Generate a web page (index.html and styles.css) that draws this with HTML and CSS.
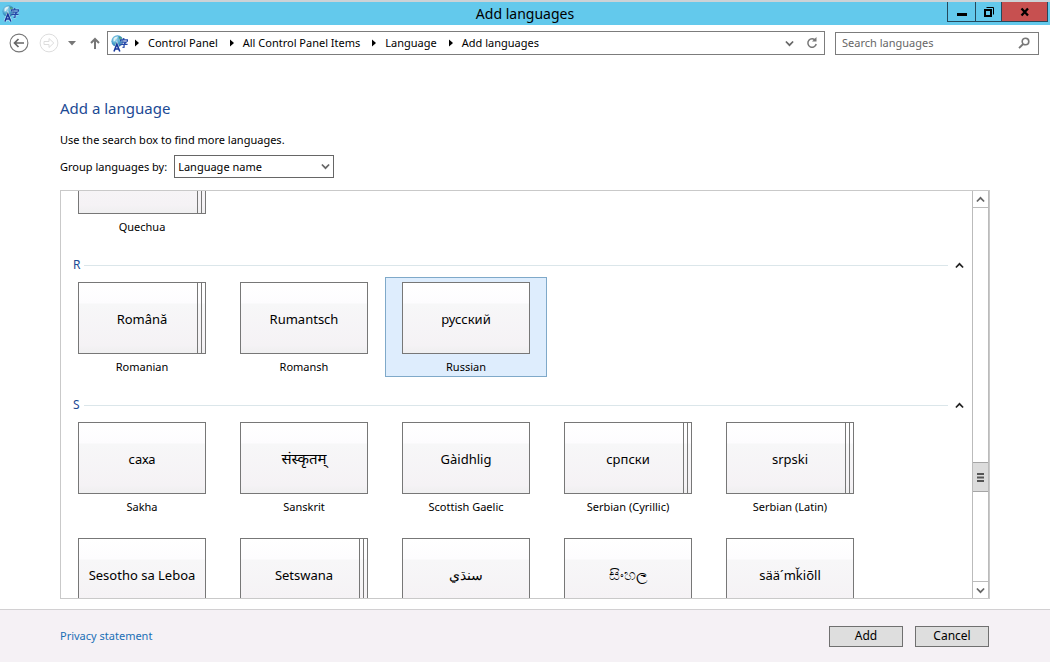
FILE: index.html
```html
<!DOCTYPE html>
<html lang="en">
<head>
<meta charset="utf-8">
<title>Add languages</title>
<link rel="stylesheet" href="styles.css">
</head>
<body>
<svg class="defs" width="0" height="0" aria-hidden="true">
  <defs>
    <radialGradient id="globe-fill" cx="35%" cy="35%" r="75%">
      <stop offset="0" stop-color="#a8dcee"/>
      <stop offset="0.5" stop-color="#4aa3d0"/>
      <stop offset="1" stop-color="#1d5f98"/>
    </radialGradient>
    <symbol id="globe" viewBox="0 0 16 16">
      <circle cx="6" cy="5.800" r="5.600" fill="url(#globe-fill)"/>
      <path d="M2.400 3.600C3.400 2 5 1.200 6.600 1.400L5.600 3.200 4.200 4 3.800 5.600 2.400 6z" fill="#dff2f4"/>
      <path d="M7.500 1.600l2.400 1 .4 1.600-2.400.4zM3.600 7.600l2-.8 1 1.400-1 1.400z" fill="#3f9a7a"/>
      <path d="M12 2.800v1.400M9 6V4.500h6.400V6M10 6.700h4.200L12.500 8.200M8.600 8.900h7M12.300 8.600v2.900l-1.500.2" fill="none" stroke="#fff" stroke-opacity=".5" stroke-width="2"/>
      <path d="M12 2.800v1.400M9 6V4.500h6.400V6M10 6.700h4.200L12.500 8.200M8.600 8.900h7M12.300 8.600v2.900l-1.500.2" fill="none" stroke="#2347a8" stroke-width="1.200"/>
      <path d="M2.800 15.500L5.500 8.700 8.300 15.500M3.900 13.200h3.300" fill="none" stroke="#fff" stroke-opacity=".7" stroke-width="2.600"/>
      <path d="M2.800 15.500L5.500 8.700 8.300 15.500M3.900 13.200h3.300" fill="none" stroke="#17379c" stroke-width="1.500"/>
    </symbol>
    <symbol id="crumb" viewBox="0 0 6 8"><path d="M1 0.500l4 3.500L1 7.500z" fill="#000"/></symbol>
    <symbol id="chev-up" viewBox="0 0 8 8"><path d="M0.800 5.800L4 2.500l3.200 3.300" fill="none" stroke="currentColor" stroke-width="1.500"/></symbol>
    <symbol id="chev-down" viewBox="0 0 8 8"><path d="M0.800 2.200L4 5.500l3.200-3.300" fill="none" stroke="currentColor" stroke-width="1.500"/></symbol>
  </defs>
</svg>

<header class="titlebar">
  <svg class="app-icon"><use href="#globe"/></svg>
  <h1 class="window-title">Add languages</h1>
  <div class="window-buttons">
    <button class="win-btn" aria-label="Minimize"><svg width="10" height="10"><path d="M0 7.500h10" stroke="#000" stroke-width="3"/></svg></button>
    <button class="win-btn win-restore" aria-label="Restore"><svg width="10" height="10"><path d="M1 3h6v6H1z" fill="none" stroke="#000" stroke-width="2"/><path d="M2.500.5h7v7" fill="none" stroke="#000"/></svg></button>
    <button class="win-btn win-close" aria-label="Close"><svg width="10" height="10"><path d="M1.500 1.500l6.500 7M8 1.500l-6.500 7" fill="none" stroke="#000" stroke-width="2.300"/></svg></button>
  </div>
</header>

<nav class="navbar" aria-label="Location">
  <button class="nav-btn nav-back" aria-label="Back"><svg width="20" height="20"><circle cx="10" cy="10" r="8.900" fill="none" stroke="#777" stroke-width="1.100"/><path d="M15 10H6M9.500 6L5.500 10l4 4" fill="none" stroke="#666" stroke-width="1.700"/></svg></button>
  <button class="nav-btn nav-forward" aria-label="Forward"><svg width="20" height="20"><circle cx="10" cy="10" r="8.900" fill="none" stroke="#ddd"/><path d="M5 8.500h5V5.500l4.800 4.500-4.800 4.500v-3H5z" fill="none" stroke="#ddd"/></svg></button>
  <button class="nav-btn nav-recent" aria-label="Recent locations"><svg width="8" height="5"><path d="M0 0h8L4 4.500z" fill="#777"/></svg></button>
  <button class="nav-btn nav-up" aria-label="Up"><svg width="10" height="12"><path d="M5 12V2M1 6l4-4 4 4" fill="none" stroke="#777" stroke-width="2"/></svg></button>
  <div class="address">
    <svg class="address-icon"><use href="#globe"/></svg>
    <ol class="crumbs">
      <li><svg class="crumb-sep"><use href="#crumb"/></svg><a href="#">Control Panel</a></li>
      <li><svg class="crumb-sep"><use href="#crumb"/></svg><a href="#">All Control Panel Items</a></li>
      <li><svg class="crumb-sep"><use href="#crumb"/></svg><a href="#">Language</a></li>
      <li><svg class="crumb-sep"><use href="#crumb"/></svg><a href="#">Add languages</a></li>
    </ol>
    <button class="nav-btn address-btn" aria-label="Previous locations"><svg class="chev"><use href="#chev-down"/></svg></button>
    <button class="nav-btn address-btn" aria-label="Refresh"><svg width="12" height="12"><path d="M9.500 3.600A4.200 4.200 0 1 0 10.200 7" fill="none" stroke="#777" stroke-width="1.500"/><path d="M6 4.600h4.500V0z" fill="#777"/></svg></button>
  </div>
  <form class="search">
    <input class="search-input" type="search" placeholder="Search languages" aria-label="Search languages">
    <button class="nav-btn" type="button" aria-label="Search"><svg width="12" height="12"><circle cx="7.500" cy="4.500" r="3.300" fill="none" stroke="#777" stroke-width="1.600"/><path d="M5.200 7L1 11.200" stroke="#777" stroke-width="1.800"/></svg></button>
  </form>
</nav>

<main class="content">
  <h2 class="heading">Add a language</h2>
  <p class="hint">Use the search box to find more languages.</p>
  <div class="group-by">
    <label for="group">Group languages by:</label>
    <div class="select-box">
      <select id="group" class="select"><option>Language name</option></select>
      <svg class="chev select-chev"><use href="#chev-down"/></svg>
    </div>
  </div>

  <section class="list" aria-label="Languages">
    <div class="list-view">
      <div class="cells">
        <button class="cell cell-cut"><span class="tile tile-stack"></span><span class="caption">Quechua</span></button>
      </div>
      <h3 class="group-head"><span>R</span><i class="rule"></i><button class="collapse" aria-label="Collapse R"><svg class="chev"><use href="#chev-up"/></svg></button></h3>
      <div class="cells">
        <button class="cell"><span class="tile tile-stack" lang="ro">Română</span><span class="caption">Romanian</span></button>
        <button class="cell"><span class="tile" lang="rm">Rumantsch</span><span class="caption">Romansh</span></button>
        <button class="cell cell-selected"><span class="tile" lang="ru">русский</span><span class="caption">Russian</span></button>
      </div>
      <h3 class="group-head"><span>S</span><i class="rule"></i><button class="collapse" aria-label="Collapse S"><svg class="chev"><use href="#chev-up"/></svg></button></h3>
      <div class="cells">
        <button class="cell"><span class="tile" lang="sah">саха</span><span class="caption">Sakha</span></button>
        <button class="cell"><span class="tile tile-indic" lang="sa">संस्कृतम्</span><span class="caption">Sanskrit</span></button>
        <button class="cell"><span class="tile" lang="gd">Gàidhlig</span><span class="caption">Scottish Gaelic</span></button>
        <button class="cell"><span class="tile tile-stack" lang="sr">српски</span><span class="caption">Serbian (Cyrillic)</span></button>
        <button class="cell"><span class="tile tile-stack" lang="sr-Latn">srpski</span><span class="caption">Serbian (Latin)</span></button>
        <button class="cell"><span class="tile" lang="nso">Sesotho sa Leboa</span></button>
        <button class="cell"><span class="tile tile-stack" lang="tn">Setswana</span></button>
        <button class="cell"><span class="tile tile-arabic" lang="sd">سنڌي</span></button>
        <button class="cell"><span class="tile tile-indic" lang="si">සිංහල</span></button>
        <button class="cell"><span class="tile" lang="sms">sää´mǩiõll</span></button>
      </div>
    </div>
    <div class="scrollbar">
      <button class="scroll-btn" aria-label="Scroll up"><svg class="chev"><use href="#chev-up"/></svg></button>
      <div class="track-above"></div>
      <div class="thumb"><svg width="7" height="9"><path d="M0 1h7M0 4.500h7M0 8h7" stroke="#555" stroke-width="2"/></svg></div>
      <div class="track-below"></div>
      <button class="scroll-btn scroll-down" aria-label="Scroll down"><svg class="chev"><use href="#chev-down"/></svg></button>
    </div>
  </section>
</main>

<footer class="footer">
  <a class="privacy" href="#">Privacy statement</a>
  <div class="actions">
    <button class="btn">Add</button>
    <button class="btn">Cancel</button>
  </div>
</footer>
</body>
</html>
```
FILE: styles.css
```css
* { box-sizing: border-box; }

body {
  margin: 0;
  height: 100vh;
  display: flex;
  flex-direction: column;
  background: #fff;
  color: #000;
  font: 11px/16px "Noto Sans", "Open Sans", sans-serif;
}

button, input, select { font: inherit; color: inherit; }
button { padding: 0; border: 0; background: none; }
svg { display: block; flex: none; }
h1, h2, h3, p, ol { margin: 0; padding: 0; font-weight: 400; }
.defs { position: absolute; }
.chev { width: 9px; height: 9px; color: #666; }

/* Title bar */
.titlebar {
  display: grid;
  grid-template-columns: 1fr auto 1fr;
  height: 25px;
  border-top: 2px solid #ccd2d6;
  background: #63c9ec;
}
.app-icon { width: 17px; height: 17px; margin: 3px 0 0 2px; }
.window-title { font-size: 14px; line-height: 23px; }
.window-buttons {
  justify-self: end;
  display: flex;
  height: 20px;
  margin-right: 2px;
  border: 1px solid #25495c;
  border-top: 0;
}
.win-btn { width: 27px; display: grid; place-items: center; }
.win-restore { border: solid #25495c; border-width: 0 1px; }
.win-close { width: 45px; background: #c75050; }

/* Navigation bar */
.navbar { display: flex; align-items: center; height: 36px; padding: 0 11px 0 9px; }
.nav-btn { flex: none; }
.nav-forward { margin-left: 10px; }
.nav-recent { margin-left: 9px; }
.nav-up { margin-left: 14px; }
.address {
  flex: 1;
  display: flex;
  align-items: center;
  height: 24px;
  margin: 0 10px 0 7px;
  padding: 0 6px 0 3px;
  border: 1px solid #7c7c7c;
}
.address-icon { width: 17px; height: 17px; }
.crumbs { flex: 1; display: flex; gap: 11px; padding-left: 6px; list-style: none; }
.crumbs li { display: flex; align-items: center; gap: 8px; }
.crumbs a { color: inherit; text-decoration: none; }
.crumb-sep { width: 6px; height: 8px; }
.address-btn { margin-left: 12px; }
.search {
  display: flex;
  align-items: center;
  width: 204px;
  height: 23px;
  padding: 0 8px 0 6px;
  border: 1px solid #7c7c7c;
}
.search-input { flex: 1; min-width: 0; padding: 0; border: 0; outline: 0; background: none; }
.search-input::placeholder { color: #666; }

/* Page content */
.content { flex: 1; min-height: 0; display: flex; flex-direction: column; padding: 36px 60px 10px; }
.heading { font-size: 15px; line-height: 22px; color: #1c4a94; }
.hint { margin-top: 13px; }
.group-by { display: flex; align-items: center; gap: 7px; margin: 7px 0 12px; }
.select-box { display: grid; align-items: center; }
.select {
  grid-area: 1 / 1;
  width: 160px;
  height: 23px;
  padding: 0 3px;
  border: 1px solid #666;
  border-radius: 0;
  background: #fff;
  appearance: none;
}
.select-chev { grid-area: 1 / 1; justify-self: end; margin-right: 4px; pointer-events: none; }

/* Language list */
.list { flex: 1; min-height: 0; display: flex; border: 1px solid #c9c9c9; }
.list-view { flex: 1; min-width: 0; overflow: hidden; }
.cells { display: grid; grid-template-columns: repeat(auto-fill, 162px); row-gap: 16px; }
.cell {
  display: flex;
  flex-direction: column;
  align-items: center;
  height: 100px;
  padding-top: 4px;
  border: 1px solid transparent;
}
.cell-selected { border-color: #7fa9c9; background: #deedfd; }
.tile {
  display: grid;
  place-items: center;
  width: 128px;
  height: 72px;
  padding-top: 2px;
  border: 1px solid #777;
  background: linear-gradient(#fff, #fdfcfe 20px, #f7f7f8 21px, #f5f2f5 62px, #efeff0);
  font-size: 13px;
  line-height: 20px;
}
.tile-indic { padding-top: 0; font-size: 15px; }
.tile-arabic { font-size: 14px; }
.tile-stack {
  padding-right: 8px;
  padding-left: 8px;
  background:
    linear-gradient(#777, #777) right 3px top / 1px 100% no-repeat,
    linear-gradient(#777, #777) right 7px top / 1px 100% no-repeat,
    linear-gradient(#fff, #fdfcfe 20px, #f7f7f8 21px, #f5f2f5 62px, #efeff0);
}
.caption { padding-top: 4px; line-height: 18px; }
.cell-cut { height: 46px; padding-top: 0; border-top: 0; }
.cell-cut .tile { height: 23px; border-top: 0; background-position: right 3px top, right 7px top, left bottom; background-size: 1px 100%, 1px 100%, 100% 70px; }
.group-head { display: flex; align-items: center; gap: 4px; height: 24px; margin-top: 16px; padding: 0 8px 0 12px; font-size: 12px; color: #1c4a94; }
.rule { flex: 1; height: 1px; background: #dbe6ea; }
.collapse { margin-left: 3px; }
.collapse .chev { color: #222; }

.scrollbar { display: flex; flex-direction: column; width: 17px; border: solid #bbb; border-width: 0 1px; }
.scroll-btn { display: grid; place-items: center; height: 17px; border-bottom: 1px solid #bbb; }
.scroll-down { border-top: 1px solid #bbb; border-bottom: 0; }
.track-above { flex: 254; }
.track-below { flex: 89; }
.thumb { display: grid; place-items: center; height: 30px; border: solid #a5a5a5; border-width: 1px 0; background: #dcdcdc; }

/* Footer */
.footer {
  display: flex;
  align-items: center;
  justify-content: space-between;
  height: 53px;
  padding: 0 61px 0 60px;
  border-top: 1px solid #d2d0d2;
  background: #f5f1f5;
}
.privacy { color: #1a6fb5; text-decoration: none; }
.actions { display: flex; gap: 12px; }
.btn { width: 74px; height: 21px; border: 1px solid #707070; background: #dedede; font-size: 12px; }
```
